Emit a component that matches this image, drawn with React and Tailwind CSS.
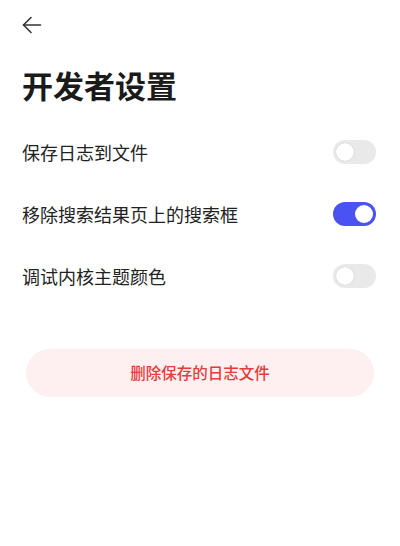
import React from "react";

function Toggle({ on }) {
  return (
    <div
      className={
        "w-[43px] h-[24px] rounded-full flex items-center px-[3px] " +
        (on ? "bg-[#4b52f2] justify-end" : "bg-[#e9e9e9] justify-start")
      }
    >
      <div className={"w-[18px] h-[18px] rounded-full bg-white " + (on ? "" : "shadow-[0_0_1px_rgba(0,0,0,0.25)]")} />
    </div>
  );
}

function Row({ label, on }) {
  return (
    <div className="flex items-center justify-between h-[62px]">
      <span className="text-[18px] text-[#222222]">{label}</span>
      <Toggle on={on} />
    </div>
  );
}

export default function App() {
  return (
    <div
      className="w-[400px] h-[546px] bg-white px-[22px]"
      style={{ fontFamily: '"Noto Sans CJK SC", "Noto Sans", sans-serif' }}
    >
      <div className="pt-[15px] h-[52px]">
        <svg width="20" height="20" viewBox="0 0 20 20" fill="none" stroke="#333333" strokeWidth="1.6" strokeLinecap="round" strokeLinejoin="round">
          <path d="M18.5 10H1.5" />
          <path d="M9 2.5L1.5 10L9 17.5" />
        </svg>
      </div>
      <h1 className="text-[31px] font-bold text-[#1a1a1a] leading-[40px] mt-[13px]">开发者设置</h1>
      <div className="mt-[16px] pr-[2px]">
        <Row label="保存日志到文件" on={false} />
        <Row label="移除搜索结果页上的搜索框" on={true} />
        <Row label="调试内核主题颜色" on={false} />
      </div>
      <div className="mt-[42px] px-[4px]">
        <button className="w-full h-[48px] rounded-full bg-[#fef0f0] text-[#e53b3b] text-[15.5px] font-medium">
          删除保存的日志文件
        </button>
      </div>
    </div>
  );
}
